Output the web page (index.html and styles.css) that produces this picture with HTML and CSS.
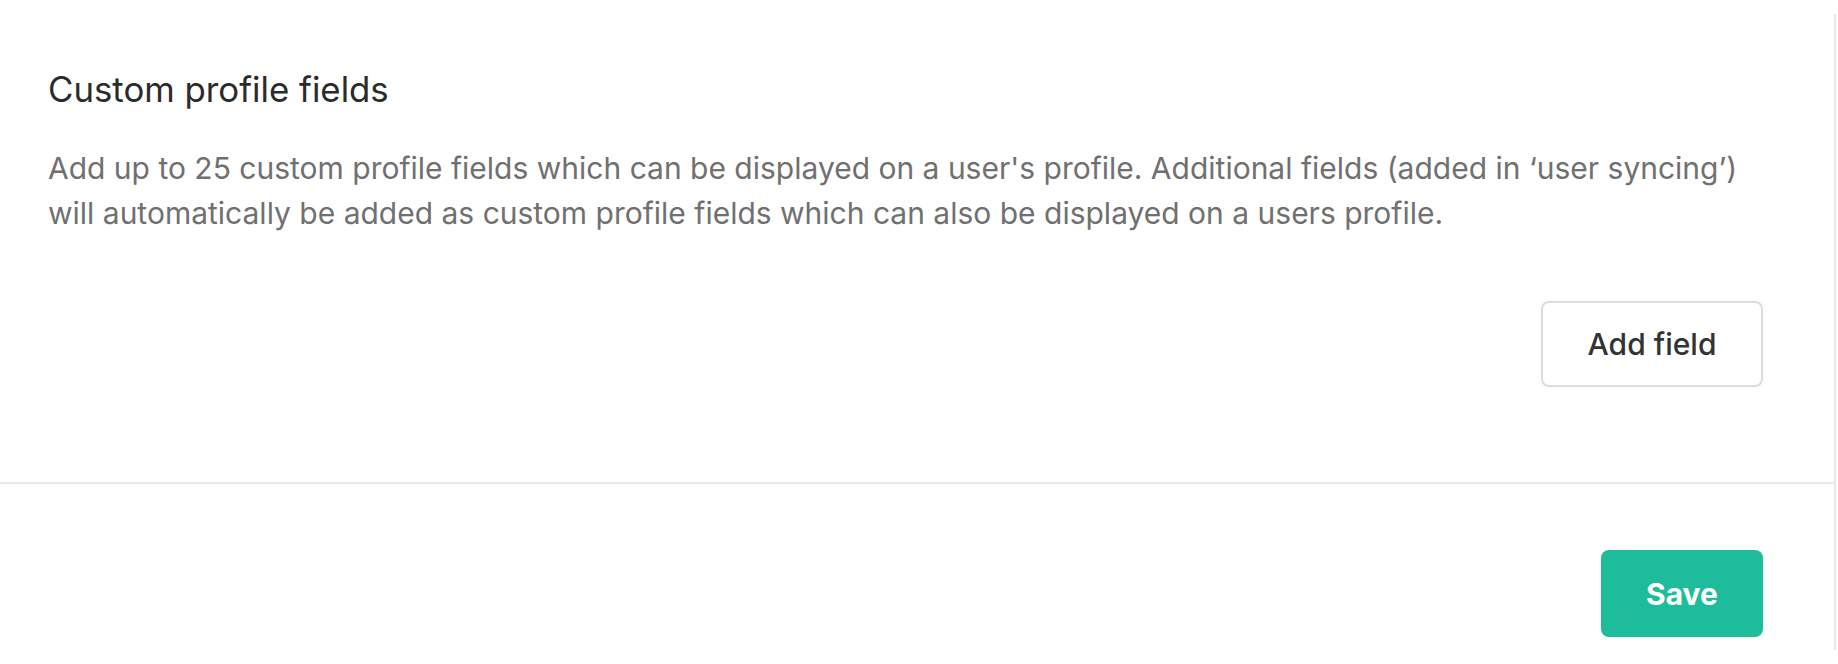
FILE: index.html
```html
<!DOCTYPE html>
<html lang="en">
<head>
  <meta charset="UTF-8">
  <meta name="viewport" content="width=device-width, initial-scale=1.0">
  <title>Custom profile fields</title>
  <link rel="stylesheet" href="styles.css">
</head>
<body>
  <div class="panel">
    <section class="fields">
      <h2 class="fields-title">Custom profile fields</h2>
      <p class="fields-desc">Add up to 25 custom profile fields which can be displayed on a user's profile. Additional fields (added in ‘user syncing’) will automatically be added as custom profile fields which can also be displayed on a users profile.</p>
      <div class="fields-actions">
        <button class="btn btn-outline">Add field</button>
      </div>
    </section>

    <div class="footer">
      <button class="btn btn-primary">Save</button>
    </div>
  </div>
</body>
</html>
```

FILE: styles.css
```css
body {
  font-family: Inter, "Liberation Sans", Arial, sans-serif;
  margin: 0;
  padding: 0;
  background-color: #ffffff;
}
.panel {
  margin-top: 14px;
  width: 1834px;
  height: 636px;
  border-right: 2px solid #e9e9e9;
}
.fields {
  padding: 55px 71px 0 48px;
  height: 413px;
  border-bottom: 2px solid #e9e9e9;
}
.fields-title {
  margin: 0;
  font-size: 34.8px;
  font-weight: 400;
  line-height: 40px;
  color: #2b2b2b;
}
.fields-desc {
  margin: 37px 0 0;
  font-size: 30px;
  line-height: 45px;
  color: #707070;
}
.fields-actions {
  display: flex;
  justify-content: flex-end;
  margin-top: 65px;
}
.btn {
  font-family: inherit;
  border-radius: 8px;
  cursor: pointer;
}
.btn-outline {
  width: 222px;
  height: 86px;
  background-color: #ffffff;
  border: 2px solid #dcdcdc;
  color: #333333;
  font-size: 30px;
  font-weight: 500;
}
.footer {
  display: flex;
  justify-content: flex-end;
  padding: 66px 71px 0 0;
}
.btn-primary {
  width: 162px;
  height: 87px;
  background-color: #1dbd9b;
  border: none;
  color: #ffffff;
  font-size: 30px;
  font-weight: 700;
}
```
